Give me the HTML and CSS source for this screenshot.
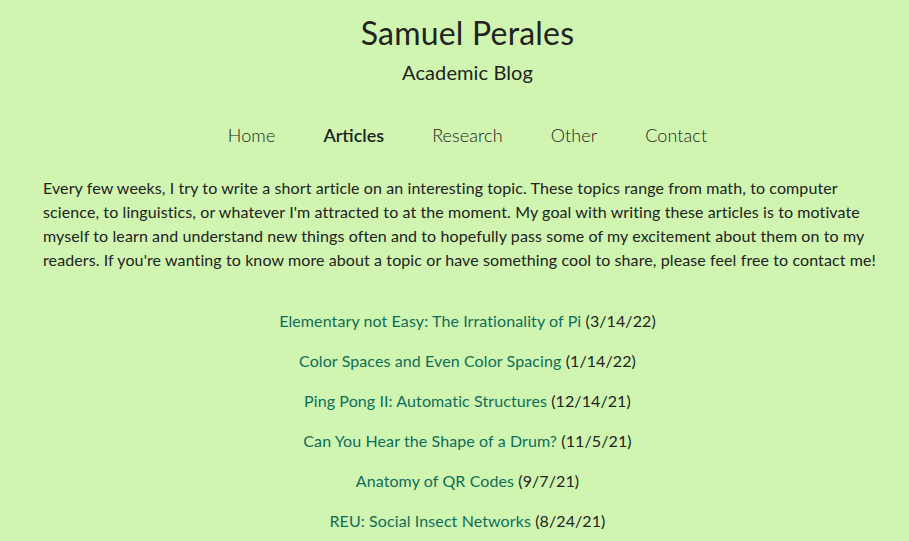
FILE: index.html
```html
<!DOCTYPE html>
<html lang="en">
<head>
<meta charset="utf-8">
<title>Samuel Perales - Articles</title>
<link rel="stylesheet" href="styles.css">
</head>
<body>
<div class="page">
  <header class="header">
    <h1 class="title">Samuel Perales</h1>
    <p class="subtitle">Academic Blog</p>
  </header>
  <nav class="nav">
    <a class="nav-item" href="#">Home</a>
    <a class="nav-item active" href="#">Articles</a>
    <a class="nav-item" href="#">Research</a>
    <a class="nav-item" href="#">Other</a>
    <a class="nav-item" href="#">Contact</a>
  </nav>
  <p class="intro">Every few weeks, I try to write a short article on an interesting topic. These topics range from math, to computer science, to linguistics, or whatever I'm attracted to at the moment. My goal with writing these articles is to motivate myself to learn and understand new things often and to hopefully pass some of my excitement about them on to my readers. If you're wanting to know more about a topic or have something cool to share, please feel free to contact me!</p>
  <ul class="articles">
    <li><a href="#">Elementary not Easy: The Irrationality of Pi</a> (3/14/22)</li>
    <li><a href="#">Color Spaces and Even Color Spacing</a> (1/14/22)</li>
    <li><a href="#">Ping Pong II: Automatic Structures</a> (12/14/21)</li>
    <li><a href="#">Can You Hear the Shape of a Drum?</a> (11/5/21)</li>
    <li><a href="#">Anatomy of QR Codes</a> (9/7/21)</li>
    <li><a href="#">REU: Social Insect Networks</a> (8/24/21)</li>
  </ul>
</div>
</body>
</html>
```
FILE: styles.css
```css
html, body {
  margin: 0;
  padding: 0;
  background: #d0f5b0;
  overflow: hidden;
}
body {
  font-family: "Lato", "Noto Sans", sans-serif;
  color: #222;
  font-size: 16px;
  letter-spacing: 0.1px;
}
.page {
  margin: 0 17px 0 43px;
  display: flex;
  flex-direction: column;
  align-items: center;
}
.header {
  text-align: center;
  padding-top: 13px;
}
.title {
  margin: 0;
  font-size: 32px;
  font-weight: 400;
  line-height: 40px;
  letter-spacing: 0.2px;
}
.subtitle {
  margin: 0;
  font-size: 20px;
  line-height: 40px;
  position: relative;
  top: -1px;
}
.nav {
  display: flex;
  gap: 48px;
  margin-top: 30px;
  line-height: 24px;
}
.nav-item {
  font-size: 18px;
  font-weight: 300;
  color: #222;
  text-decoration: none;
  letter-spacing: 0.1px;
}
.nav-item.active {
  font-weight: 600;
  letter-spacing: 0;
}
.intro {
  align-self: stretch;
  margin: 29px 0 0;
  line-height: 24px;
}
.articles {
  list-style: none;
  margin: 37px 0 0;
  padding: 0;
  text-align: center;
  display: flex;
  flex-direction: column;
  gap: 16px;
  line-height: 24px;
}
.articles a {
  color: #0d6e5a;
  text-decoration: none;
}
```
